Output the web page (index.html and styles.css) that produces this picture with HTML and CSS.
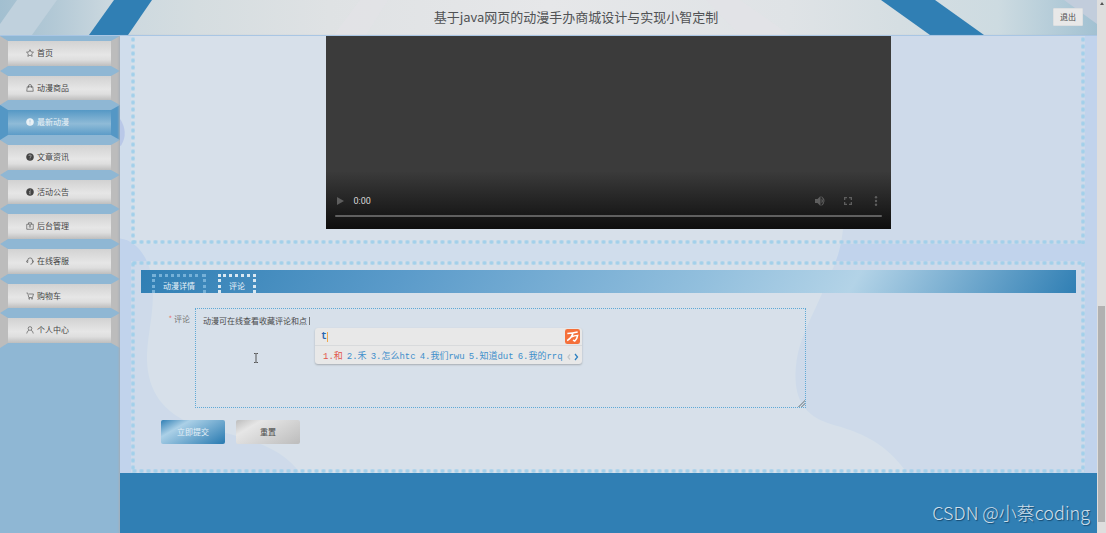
FILE: index.html
```html
<!DOCTYPE html>
<html lang="zh-CN">
<head>
<meta charset="utf-8">
<title>基于java网页的动漫手办商城设计与实现小智定制</title>
<link rel="stylesheet" href="styles.css">
</head>
<body>
<div class="window">
  <div class="page">
    <header class="header">
      <svg class="header-art" viewBox="0 0 1097 35" preserveAspectRatio="none" aria-hidden="true">
        <defs>
          <linearGradient id="sky">
            <stop offset="0" stop-color="#a2bfd0"/><stop offset=".05" stop-color="#b3c9d6"/><stop offset=".1" stop-color="#cbd8df"/>
            <stop offset=".18" stop-color="#d5dde0"/><stop offset=".3" stop-color="#dfe2e4"/><stop offset=".5" stop-color="#e6e7e9"/>
            <stop offset=".72" stop-color="#dfe3e6"/><stop offset=".82" stop-color="#d5dee2"/><stop offset=".91" stop-color="#cddbe1"/><stop offset="1" stop-color="#a2c1d2"/>
          </linearGradient>
        </defs>
        <path fill="url(#sky)" d="M0 0H1097V35H0z"/>
        <path fill="#c0d1dd" d="M17 0H57L32 35H0V24z"/>
        <path fill="#307fb4" d="M114 0H152L128 35H89z"/>
        <path fill="#e3e3e7" opacity=".7" d="M360 0H388L366 35H334zM706 0H740L790 35H740z"/>
        <path fill="#307fb4" d="M881 0H935L984 35H930z"/>
        <path fill="#c2cddc" d="M1064 0H1097V24z"/>
      </svg>
      <h1 class="title">基于java网页的动漫手办商城设计与实现小智定制</h1>
      <button class="logout" type="button">退出</button>
    </header>
    <div class="body">
      <nav class="sidebar" aria-label="主菜单">
        <ul class="menu">
          <li><a class="item" href="#home"><svg class="icon" viewBox="0 0 16 16"><path d="M8 1.300l2.100 4.500 4.900.6-3.600 3.400.9 4.900L8 12.300l-4.300 2.400.9-4.900L1 6.400l4.900-.6z"/></svg>首页</a></li>
          <li><a class="item" href="#goods"><svg class="icon" viewBox="0 0 16 16"><path d="M2.500 5.500h11l1 9h-13zM5 7.500V4a3 3 0 0 1 6 0v3.500"/></svg>动漫商品</a></li>
          <li><a class="item active" href="#anime" aria-current="page"><svg class="icon" viewBox="0 0 16 16"><circle class="solid" cx="8" cy="8" r="7"/><path class="cut-blue" d="M8 3.500v5.500M8 11v1.700"/></svg>最新动漫</a></li>
          <li><a class="item" href="#news"><svg class="icon" viewBox="0 0 16 16"><circle class="solid" cx="8" cy="8" r="7"/><path class="cut" d="M5.700 6a2.300 2.300 0 1 1 3.300 2.100Q8 8.600 8 9.800M8 11.200v1.500"/></svg>文章资讯</a></li>
          <li><a class="item" href="#notice"><svg class="icon" viewBox="0 0 16 16"><circle class="solid" cx="8" cy="8" r="7"/><path class="cut" d="M8.800 3.300v1.700M6.500 7h1.900L7.300 12h1.900"/></svg>活动公告</a></li>
          <li><a class="item" href="#admin"><svg class="icon" viewBox="0 0 16 16"><path d="M1.500 4.500h13v10h-13zM5 4.500v-3h6v3M8 12V7M5.500 9L8 6.800 10.500 9"/></svg>后台管理</a></li>
          <li><a class="item" href="#service"><svg class="icon" viewBox="0 0 16 16"><path d="M3.500 11V6.500a4.700 4.700 0 0 1 9.400 0V11q0 3.500-4 3.500M3.500 7Q1 7 1 9t2.500 2M13 7q2 0 2 2t-2 2"/></svg>在线客服</a></li>
          <li><a class="item" href="#cart"><svg class="icon" viewBox="0 0 16 16"><path d="M1 2h2.500l2 9H13l2-7H6"/><circle cx="6.500" cy="13.500" r="1"/><circle cx="12" cy="13.500" r="1"/></svg>购物车</a></li>
          <li><a class="item" href="#me"><svg class="icon" viewBox="0 0 16 16"><circle cx="8" cy="5" r="3.700"/><path d="M1.500 15Q2 9.500 6 8.700M14.500 15Q14 9.500 10 8.700"/></svg>个人中心</a></li>
        </ul>
      </nav>
      <div class="content">
        <main class="main">
          <svg class="backdrop" viewBox="0 0 977 438" preserveAspectRatio="none" aria-hidden="true">
            <path fill="#d0ddec" d="M0 0H977V438H0z"/>
            <path fill="#c1d3ec" d="M740 0H977V438H787C770 414 752 403 730 395C713 388 695 388 683 370C673 356 674 330 680 310C688 285 700 266 707 245Q721 220 723 194z"/>
            <path fill="#c1d3ec" d="M0 203C20 205 33 230 33 255C33 285 27 300 27 325C28 358 45 377 70 388C97 399 155 402 180 438H0z"/>
            <path fill="#b9c8e8" d="M0 83Q9 97 1 110H0z"/>
          </svg>
          <section class="panel panel-video" aria-label="视频">
            <div class="video">
              <div class="controls">
                <button class="ctl" type="button" aria-label="播放"><svg viewBox="0 0 12 12"><path d="M3 2l7 4-7 4z"/></svg></button>
                <span class="time">0:00</span>
                <button class="ctl" type="button" aria-label="音量"><svg viewBox="0 0 12 12"><path d="M1 4h2.500L6.500 1v10l-3-3H1zM7.500 3.500q3 2.500 0 5zM7.500 1q6 5 0 10v-1.200q4-3.800 0-7.600z"/></svg></button>
                <button class="ctl" type="button" aria-label="全屏"><svg viewBox="0 0 12 12"><path d="M2 2h3v1.300H3.300V5H2zM7 2h3v3H8.700V3.300H7zM2 7h1.300v1.700H5V10H2zM8.700 7H10v3H7V8.700h1.700z"/></svg></button>
                <button class="ctl" type="button" aria-label="更多"><svg viewBox="0 0 12 12"><circle cx="6" cy="2.200" r="1.200"/><circle cx="6" cy="6" r="1.200"/><circle cx="6" cy="9.800" r="1.200"/></svg></button>
              </div>
              <div class="track"></div>
            </div>
          </section>
          <section class="panel panel-form">
            <div class="tabs" role="tablist">
              <button class="tab" type="button" role="tab" aria-selected="false">动漫详情</button>
              <button class="tab selected" type="button" role="tab" aria-selected="true">评论</button>
            </div>
            <form class="form">
              <div class="field">
                <label class="label" for="comment"><span class="star">*</span> 评论</label>
                <div class="entry">
                  <textarea class="comment" id="comment" spellcheck="false">动漫可在线查看收藏评论和点</textarea>
                  <svg class="pointer" viewBox="0 0 6 10" aria-hidden="true"><path d="M1 .5h1.500L3 1l.5-.5H5M3 1v8M1 9.500h1.500L3 9l.5.5H5"/></svg>
                  <div class="ime">
                    <div class="ime-top">
                      <span class="typed">t</span>
                      <svg class="ime-logo" viewBox="0 0 16 16" aria-hidden="true"><rect width="16" height="16" rx="2.500"/><path d="M2.500 4.800Q8 4.700 13.500 3.200M8.500 4.800Q7 9.500 2.300 12.500M6.500 8.500Q10 7 13.500 6.800Q12.800 11 10.500 12.800L8.500 11.800"/></svg>
                    </div>
                    <div class="ime-list">
                      <span class="first">1.和</span><span>2.禾</span><span>3.怎么htc</span><span>4.我们rwu</span><span>5.知道dut</span><span>6.我的rrq</span>
                      <svg class="ime-nav" viewBox="0 0 12 8" aria-hidden="true"><path class="prev" d="M3 1.500L1 4l2 2.500"/><path class="next" d="M8 1l2.500 3L8 7"/></svg>
                    </div>
                  </div>
                </div>
              </div>
              <div class="actions">
                <button class="btn primary" type="button">立即提交</button>
                <button class="btn" type="reset">重置</button>
              </div>
            </form>
          </section>
        </main>
        <footer class="footer"><span class="mark">CSDN @小蔡coding</span></footer>
      </div>
    </div>
  </div>
  <div class="scrollbar" aria-hidden="true"><span class="arrow"></span><span class="thumb"></span></div>
</div>
</body>
</html>
```

FILE: styles.css
```css
* { box-sizing: border-box; }

body {
  margin: 0;
  color: #4a4a4a;
  font: 8px/12px "Noto Sans CJK SC", sans-serif;
}

button, textarea { font: inherit; color: inherit; }
button { margin: 0; padding: 0; border: 0; cursor: pointer; }

.window { display: flex; height: 100vh; overflow: hidden; }
.page { flex: 1; min-width: 0; display: flex; flex-direction: column; }

/* Header */
.header {
  position: relative;
  display: flex;
  align-items: center;
  height: 36px;
  padding: 0 14px 1px 99px;
  border-bottom: 1px solid #a9c6e4;
}
.header-art { position: absolute; inset: 0; z-index: -1; width: 100%; height: 100%; }
.title {
  flex: 1;
  margin: 0;
  color: #505254;
  font-size: 13px;
  line-height: 18px;
  font-weight: 400;
  text-align: center;
}
.logout {
  width: 30px;
  height: 18px;
  line-height: 16px;
  background: #e8e8e8;
  border: 1px solid #dcdfe1;
  border-radius: 1px;
}

.body { flex: 1; display: flex; min-height: 0; }

/* Sidebar */
.sidebar { width: 120px; background: #8fb7d4; }
.menu {
  display: flex;
  flex-direction: column;
  height: 312px;
  margin: 0;
  padding: 0;
  list-style: none;
}
.menu li { flex: 1; display: flex; }
.item {
  flex: 1;
  display: flex;
  align-items: center;
  gap: 3px;
  padding: 0 0 1px 18px;
  border: solid #bcbcbc;
  border-color: #8fb7d4 #bcbcbc;
  border-width: 5px 9px 5px 8px;
  background: linear-gradient(#d2d2d2, #e6e6e6 55%, #dedede 75%, #bebebe);
  color: #444;
  text-decoration: none;
}
.item.active {
  border-color: #8fb7d4 #5497c5;
  background: linear-gradient(#5598c5, #8fbbd7 55%, #5c9cc8);
  color: #e9f1f6;
}
.icon { width: 8px; height: 8px; fill: none; stroke: currentColor; stroke-width: 1.2; }
.icon .solid { fill: currentColor; }
.icon .cut { stroke: #ddd; }
.icon .cut-blue { stroke: #86b4d3; }

/* Content */
.content {
  flex: 1;
  min-width: 0;
  display: flex;
  flex-direction: column;
  box-shadow: -1px 0 2px #a5aeb8;
}
.main {
  position: relative;
  display: flex;
  flex-direction: column;
  gap: 17px;
  padding: 0 12px 0 11px;
}
.backdrop { position: absolute; inset: 0; z-index: -1; width: 100%; height: 100%; }

.panel {
  --dot: radial-gradient(circle, #a2d0ea 1px, transparent 3px);
  background:
    var(--dot) left top / 4px 7px repeat-y,
    var(--dot) right top / 4px 7px repeat-y,
    var(--dot) left bottom / 7px 4px repeat-x,
    rgba(226, 229, 232, .4);
}
.panel-video { display: flex; justify-content: center; padding-bottom: 15px; }
.panel-form {
  padding: 9px 9px 29px 10px;
  background:
    var(--dot) left top / 4px 7px repeat-y,
    var(--dot) right top / 4px 7px repeat-y,
    var(--dot) left bottom / 7px 4px repeat-x,
    var(--dot) left top / 7px 4px repeat-x,
    rgba(226, 229, 232, .4);
}

.video {
  display: flex;
  flex-direction: column;
  justify-content: flex-end;
  width: 565px;
  height: 193px;
  padding: 0 9px 12px;
  background: linear-gradient(#3b3b3b 70%, #0e0e0e);
}
.controls { display: flex; align-items: center; gap: 16px; padding-bottom: 8px; }
.ctl { width: 12px; height: 12px; background: none; }
.ctl svg { display: block; fill: #5e5e5e; }
.ctl:first-child { margin: 0 -10px 0 -1px; }
.time {
  flex: 1;
  padding-left: 2px;
  color: #d8d8d8;
  font: 9px/12px Roboto, sans-serif;
}
.track { height: 2px; border-radius: 1px; background: #606060; }

.tabs {
  display: flex;
  align-items: flex-end;
  gap: 12px;
  height: 23px;
  padding-left: 11px;
  background: linear-gradient(120deg, #307fb4, #5b9bca 28%, #92bfdd 60%, #b3d3e7 76%, #307fb4);
}
.tab {
  height: 19px;
  padding: 2px 8px 0;
  border: 3px dotted #76b1d8;
  border-bottom: 0;
  background: none;
  color: #e5f0f7;
}
.tab.selected { border-color: #d9e8f2; }

.form { padding-top: 15px; }
.field { display: flex; }
.label { width: 54px; padding: 5px 5px 0 0; color: #777; text-align: right; }
.star { color: #e97a76; }
.entry { position: relative; flex: 0 1 611px; }
.comment {
  display: block;
  width: 100%;
  height: 100px;
  padding: 6px 7px;
  border: 1px dotted #5fa9d6;
  outline: 0;
  background: none;
  resize: both;
}
.comment::-webkit-resizer {
  background: linear-gradient(135deg, transparent 76%, #9aa5ae 76% 80%, transparent 80% 86%, #9aa5ae 86% 90%, transparent 90%);
}
.pointer { position: absolute; left: 58px; top: 45px; width: 6px; height: 10px; fill: none; stroke: #555; }

/* Input method candidates, floating over the text box */
.ime {
  position: absolute;
  left: 120px;
  top: 20px;
  width: 267px;
  border-radius: 3px;
  background: #e8e8e8;
  box-shadow: 0 1px 2px #a6abb1;
  color: #3f8fcb;
  font: 9px/16px "Liberation Mono", "Noto Sans CJK SC", monospace;
}
.ime::before {
  content: "";
  position: absolute;
  left: -6px;
  top: -11px;
  width: 1px;
  height: 8px;
  background: #777;
}
.ime-top {
  display: flex;
  align-items: center;
  justify-content: space-between;
  height: 18px;
  padding: 0 2px 0 6px;
  border-bottom: 1px solid #d8dadc;
}
.typed { border-right: 1px solid #f0a850; color: #2866b0; font-size: 10px; font-weight: 700; line-height: 10px; }
.ime-logo { width: 15px; height: 15px; fill: #f5703a; stroke: #fff; stroke-width: 1.6; }
.ime-logo rect { stroke: none; }
.ime-logo path { fill: none; }
.ime-list { display: flex; align-items: center; gap: 4px; height: 18px; padding: 3px 0 0 8px; white-space: nowrap; }
.first { color: #e2564c; }
.ime-nav { width: 12px; height: 8px; fill: none; stroke-width: 1.3; }
.prev { stroke: #c4c8cb; }
.next { stroke: #2e80c0; }

.actions { display: flex; gap: 11px; padding: 12px 0 0 20px; }
.btn {
  width: 64px;
  height: 24px;
  border-radius: 2px;
  background: linear-gradient(150deg, #bdbdbd, #e6e6e6 25%, #bcbcbc);
}
.btn.primary { background: linear-gradient(150deg, #307fb4, #abd0e7 28%, #307fb4 95%); color: #e6f0f7; }

.footer {
  flex: 1;
  display: flex;
  justify-content: flex-end;
  align-items: flex-start;
  padding: 27px 7px 0;
  background: #307fb4;
}
.mark {
  color: #cfdfea;
  font-size: 18px;
  line-height: 24px;
  font-weight: 300;
  text-shadow: 1px 1px 1px #164a70;
}

/* Scroll bar */
.scrollbar { display: flex; flex-direction: column; align-items: center; width: 9px; background: #dedede; }
.arrow { margin-top: 2px; border: solid transparent; border-width: 0 2px 3px; border-bottom-color: #555; }
.thumb { width: 7px; height: 216px; margin: auto 0 11px; background: #b1b1b1; }
```
